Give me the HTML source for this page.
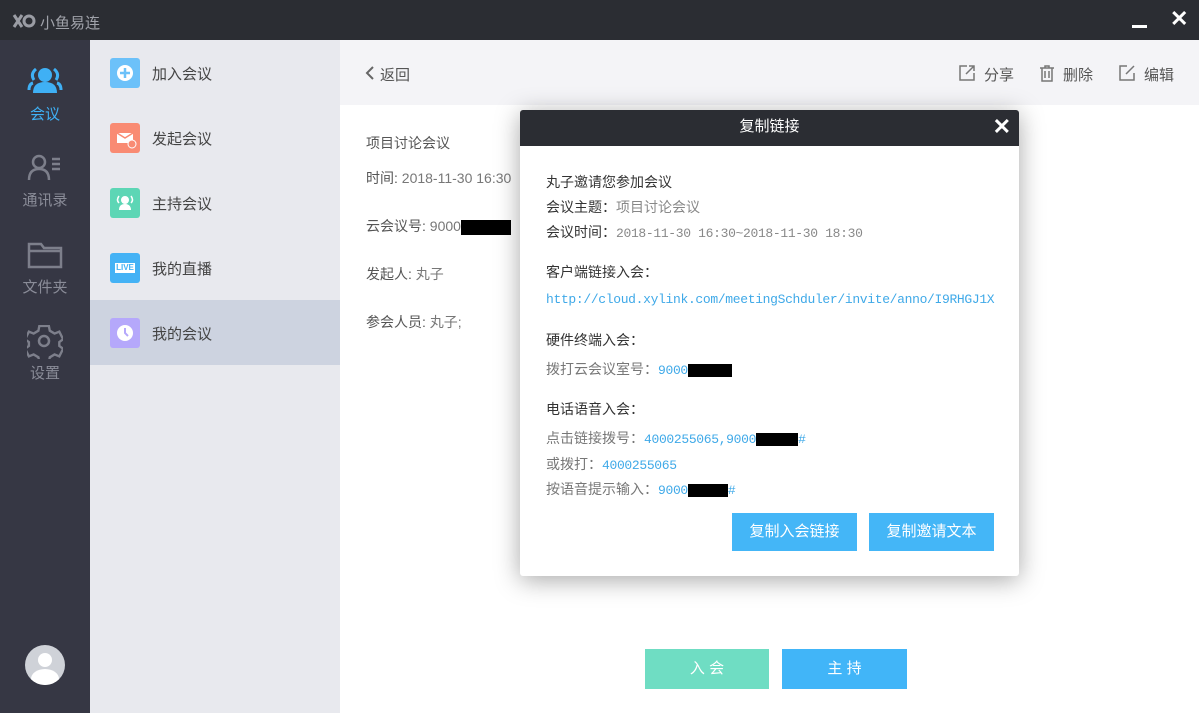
<!DOCTYPE html>
<html><head><meta charset="utf-8"><style>
*{margin:0;padding:0;box-sizing:border-box}
body{width:1199px;height:713px;overflow:hidden;position:relative;background:#fff;font-family:"Liberation Sans","Noto Sans CJK SC",sans-serif;font-size:14px;color:#555}
.abs{position:absolute}
.top{left:0;top:0;width:1199px;height:40px;background:#2b2d33}
.nav{left:0;top:40px;width:90px;height:673px;background:#363744}
.sub{left:90px;top:40px;width:250px;height:673px;background:#e8e9ee}
.hdr{left:340px;top:40px;width:859px;height:65px;background:#f4f4f7}
.navitem{position:absolute;left:0;width:90px;text-align:center;font-size:15px;color:#8a8c98}
.si{position:absolute;left:110px;width:30px;height:30px;border-radius:3px}
.st{position:absolute;left:152px;font-size:15px;color:#444}
.ct{position:absolute;left:366px;font-size:14px;color:#555}
.ct span{color:#777}
.dlg{left:520px;top:110px;width:499px;height:466px;background:#fff;border-radius:3px;box-shadow:0 4px 25px rgba(0,0,0,.35);overflow:hidden}
.dh{height:36px;background:#2b2d33;color:#fff;text-align:center;line-height:34px;font-size:15px}
.dl{position:absolute;left:26px;font-size:14px;color:#333;white-space:nowrap}
.m{font-family:"Liberation Mono",monospace;font-size:13px;letter-spacing:-0.33px;color:#888}
.b{color:#3fa9e8}
.blk{display:inline-block;background:#000;vertical-align:middle}
.btn{position:absolute;height:38px;color:#fff;font-size:15px;text-align:center;line-height:38px;background:#44b6f7}
.hi{position:absolute;top:64px;font-size:15px;color:#555}
</style></head><body>
<div class="abs top"></div>
<svg class="abs" style="left:12px;top:13px" width="24" height="16" viewBox="0 0 24 16"><path d="M2 2 L10 14 M10 2 L2 14" stroke="#9a9ca4" stroke-width="3"/><circle cx="17" cy="8" r="5" fill="none" stroke="#9a9ca4" stroke-width="3"/></svg>
<div class="abs" style="left:40px;top:12px;color:#a0a2aa;font-size:15px">小鱼易连</div>
<div class="abs" style="left:1132px;top:25px;width:15px;height:3px;background:#fff"></div>
<div class="abs" style="left:1170px;top:6px;color:#fff;font-size:22px;font-weight:bold">✕</div>
<div class="abs nav"></div>
<svg class="abs" style="left:27px;top:66px" width="36" height="28" viewBox="0 0 36 28"><circle cx="18" cy="9" r="7" fill="#3fb0f5"/><path d="M6 27 Q6 16 18 16 Q30 16 30 27Z" fill="#3fb0f5"/><path d="M9 3 Q3 8 7 14 M2 24 Q2 18 6 17 M27 3 Q33 8 29 14 M34 24 Q34 18 30 17" stroke="#3fb0f5" stroke-width="3" fill="none"/></svg>
<div class="navitem" style="top:103px;color:#3fb0f5">会议</div>
<svg class="abs" style="left:27px;top:154px" width="36" height="28" viewBox="0 0 36 28"><circle cx="12" cy="8" r="6" fill="none" stroke="#7d7f8b" stroke-width="2.5"/><path d="M2 26 Q2 15 12 15 Q22 15 22 26" fill="none" stroke="#7d7f8b" stroke-width="2.5"/><path d="M25 5h8M25 10h8M25 15h8" stroke="#7d7f8b" stroke-width="2.5"/></svg>
<div class="navitem" style="top:189px">通讯录</div>
<svg class="abs" style="left:27px;top:240px" width="36" height="30" viewBox="0 0 36 30"><path d="M2 4 h12 l3 4 h17 v19 h-32z M2 11 h32" fill="none" stroke="#7d7f8b" stroke-width="2.5"/></svg>
<div class="navitem" style="top:276px">文件夹</div>
<svg class="abs" style="left:27px;top:325px" width="36" height="34" viewBox="0 0 36 34"><path d="M13 2h10l1 5 5 3 5-2 4 8-4 3v4l4 3-4 8-5-2-5 3-1 5h-10l-1-5-5-3-5 2-4-8 4-3v-4l-4-3 4-8 5 2 5-3z" transform="scale(0.95) translate(0,-1)" fill="none" stroke="#7d7f8b" stroke-width="2.5"/><circle cx="17" cy="16" r="5" fill="none" stroke="#7d7f8b" stroke-width="2.5"/></svg>
<div class="navitem" style="top:362px">设置</div>
<div class="abs" style="left:25px;top:645px;width:40px;height:40px;border-radius:50%;background:#cfd2d8;overflow:hidden"><div style="position:absolute;left:13px;top:8px;width:14px;height:14px;border-radius:50%;background:#fff"></div><div style="position:absolute;left:6px;top:24px;width:28px;height:20px;border-radius:50%;background:#fff"></div></div>
<div class="abs sub"></div>
<div class="abs" style="left:90px;top:300px;width:250px;height:65px;background:#cdd3e0"></div>
<div class="si" style="top:58px;background:#6cc1f9"><svg width="30" height="30"><circle cx="15" cy="15" r="8" fill="#fff"/><path d="M15 10v10M10 15h10" stroke="#6cc1f9" stroke-width="2.5"/></svg></div>
<div class="st" style="top:63px">加入会议</div>
<div class="si" style="top:123px;background:#f98b73"><svg width="30" height="30"><path d="M7 10h16v10h-16z" fill="#fff"/><path d="M7 10l8 5 8-5" stroke="#f98b73" stroke-width="1.5" fill="none"/><circle cx="22" cy="21" r="4" fill="#f98b73" stroke="#fff"/></svg></div>
<div class="st" style="top:128px">发起会议</div>
<div class="si" style="top:188px;background:#5dd6b5"><svg width="30" height="30"><circle cx="15" cy="12" r="4" fill="#fff"/><path d="M9 22q0-6 6-6t6 6z" fill="#fff"/><path d="M9 8q-3 4 0 7M21 8q3 4 0 7" stroke="#fff" stroke-width="1.5" fill="none"/></svg></div>
<div class="st" style="top:193px">主持会议</div>
<div class="si" style="top:253px;background:#44b2f5"><div style="position:absolute;left:5px;top:10px;width:20px;height:10px;background:#fff;color:#44b2f5;font-size:8px;font-weight:bold;text-align:center;line-height:10px">LIVE</div></div>
<div class="st" style="top:258px">我的直播</div>
<div class="si" style="top:318px;background:#b5a8fb"><svg width="30" height="30"><circle cx="15" cy="15" r="8" fill="#fff"/><path d="M15 10v5l3 3" stroke="#b5a8fb" stroke-width="2" fill="none"/></svg></div>
<div class="st" style="top:323px">我的会议</div>
<div class="abs hdr"></div>
<svg class="abs" style="left:364px;top:65px" width="12" height="16"><path d="M9 2L3 8l6 6" stroke="#666" stroke-width="2" fill="none"/></svg>
<div class="hi" style="left:380px">返回</div>
<svg class="abs" style="left:958px;top:64px" width="18" height="18"><path d="M9 2H2v14h14V9M11 2h5v5M16 2l-8 8" stroke="#777" stroke-width="1.5" fill="none"/></svg>
<div class="hi" style="left:984px">分享</div>
<svg class="abs" style="left:1039px;top:64px" width="16" height="18"><path d="M1 4h14M6 4V2h4v2M3 4v13h10V4M6 7v7M10 7v7" stroke="#777" stroke-width="1.5" fill="none"/></svg>
<div class="hi" style="left:1063px">删除</div>
<svg class="abs" style="left:1118px;top:64px" width="18" height="18"><path d="M9 2H2v14h14V9M16 2l-8 8" stroke="#777" stroke-width="1.5" fill="none"/></svg>
<div class="hi" style="left:1144px">编辑</div>
<div class="ct" style="top:133px">项目讨论会议</div>
<div class="ct" style="top:168px">时间: <span>2018-11-30 16:30</span></div>
<div class="ct" style="top:216px">云会议号: <span>9000</span><i class="blk" style="width:50px;height:15px"></i></div>
<div class="ct" style="top:264px">发起人: <span>丸子</span></div>
<div class="ct" style="top:312px">参会人员: <span>丸子;</span></div>
<div class="btn" style="left:645px;top:649px;width:124px;height:40px;line-height:40px;background:#6fddc3">入 会</div>
<div class="btn" style="left:782px;top:649px;width:125px;height:40px;line-height:40px;background:#41b5f8">主 持</div>
<div class="abs dlg">
<div class="dh">复制链接</div>
<div class="abs" style="right:8px;top:4px;color:#fff;font-size:22px;font-weight:bold">✕</div>
<div class="dl" style="top:62px">丸子邀请您参加会议</div>
<div class="dl" style="top:87px">会议主题：<span style="color:#888">项目讨论会议</span></div>
<div class="dl" style="top:112px">会议时间：<span class="m">2018-11-30 16:30~2018-11-30 18:30</span></div>
<div class="dl" style="top:152px">客户端链接入会：</div>
<div class="dl m b" style="top:182px">http://cloud.xylink.com/meetingSchduler/invite/anno/I9RHGJ1X</div>
<div class="dl" style="top:220px">硬件终端入会：</div>
<div class="dl" style="top:249px;color:#777">拨打云会议室号：<span class="m b">9000</span><i class="blk" style="width:44px;height:13px"></i></div>
<div class="dl" style="top:289px">电话语音入会：</div>
<div class="dl" style="top:318px;color:#777">点击链接拨号：<span class="m b">4000255065,9000</span><i class="blk" style="width:42px;height:13px"></i><span class="m b">#</span></div>
<div class="dl" style="top:344px;color:#777">或拨打：<span class="m b">4000255065</span></div>
<div class="dl" style="top:369px;color:#777">按语音提示输入：<span class="m b">9000</span><i class="blk" style="width:40px;height:13px"></i><span class="m b">#</span></div>
<div class="btn" style="left:212px;top:403px;width:125px">复制入会链接</div>
<div class="btn" style="left:349px;top:403px;width:125px">复制邀请文本</div>
</div>
</body></html>
